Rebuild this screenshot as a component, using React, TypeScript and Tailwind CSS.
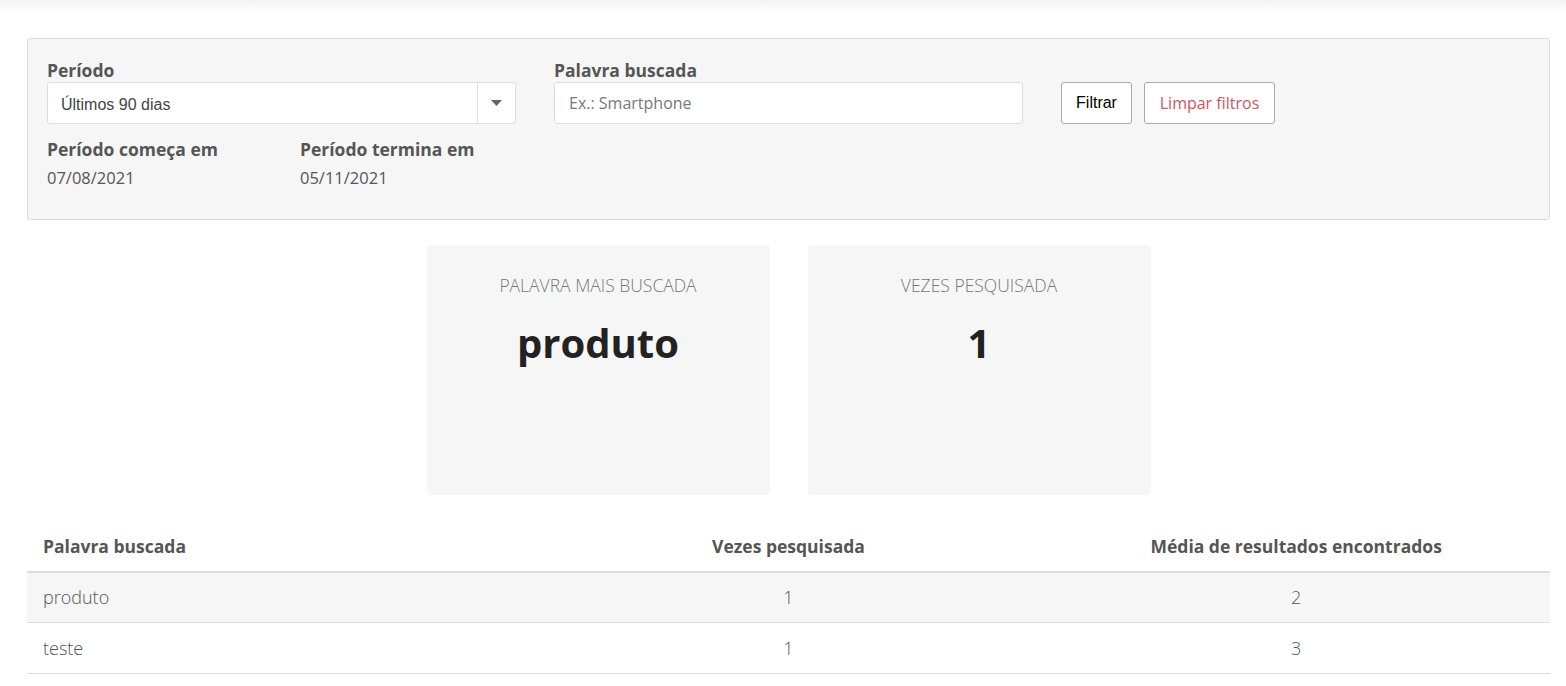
const rows = [
  { word: "produto", times: 1, avg: 2 },
  { word: "teste", times: 1, avg: 3 },
]

export default function App() {
  return (
    <div className="min-h-screen bg-white font-['Open_Sans',sans-serif] text-[#555]">
      {/* header shadow */}
      <div className="h-[14px] bg-gradient-to-b from-[#f3f3f3] to-white" />

      <div className="px-[27px] pt-[24px] pr-[16px]">
        {/* Filters */}
        <div className="rounded-[3px] border border-[#dcdcdc] bg-[#f6f6f6] px-[19px] pt-[19px] pb-[28px]">
          <div className="flex items-end">
            <div className="w-[469px]">
              <label className="block text-[17.5px] font-bold leading-[24px] text-[#555]">Período</label>
              <div className="flex h-[42px] items-center rounded-[3px] border border-[#dedede] bg-white">
                <span className="flex-1 pt-[3px] pl-[13px] font-['Liberation_Sans',sans-serif] text-[16px] text-[#444]">
                  Últimos 90 dias
                </span>
                <span className="flex h-full w-[38px] items-center justify-center border-l border-[#e2e2e2]">
                  <svg width="11" height="6" viewBox="0 0 11 6">
                    <path d="M0 0h11L5.5 6z" fill="#666" />
                  </svg>
                </span>
              </div>
            </div>
            <div className="ml-[38px] w-[469px]">
              <label className="block text-[17.5px] font-bold leading-[24px] text-[#555]">Palavra buscada</label>
              <input
                placeholder="Ex.: Smartphone"
                className="h-[42px] w-full rounded-[3px] border border-[#dedede] bg-white px-[14px] text-[16px] text-[#444] outline-none placeholder:text-[#777]"
              />
            </div>
            <button className="ml-[38px] h-[42px] w-[71px] rounded-[3px] border border-[#aaa] bg-white font-['Liberation_Sans',sans-serif] text-[16px] text-black">
              Filtrar
            </button>
            <button className="ml-[12px] h-[42px] w-[131px] rounded-[3px] border border-[#aaa] bg-white text-[16px] text-[#d0555c]">
              Limpar filtros
            </button>
          </div>
          <div className="mt-[13px] flex">
            <div className="w-[253px]">
              <div className="text-[17.5px] font-bold leading-[24px]">Período começa em</div>
              <div className="mt-[5px] text-[16.5px] text-[#555]">07/08/2021</div>
            </div>
            <div>
              <div className="text-[17.5px] font-bold leading-[24px]">Período termina em</div>
              <div className="mt-[5px] text-[16.5px] text-[#555]">05/11/2021</div>
            </div>
          </div>
        </div>

        {/* Cards */}
        <div className="mt-[25px] flex justify-center gap-[38px]">
          <Card title="PALAVRA MAIS BUSCADA" value="produto" />
          <Card title="VEZES PESQUISADA" value="1" />
        </div>

        {/* Table */}
        <table className="mt-[26px] w-full table-fixed border-collapse">
          <thead>
            <tr className="border-b-2 border-[#ddd]">
              <th className="h-[51px] px-[16px] text-left text-[17.5px] font-bold text-[#555]">Palavra buscada</th>
              <th className="px-[16px] text-center text-[17.5px] font-bold text-[#555]">Vezes pesquisada</th>
              <th className="px-[16px] text-center text-[17.5px] font-bold text-[#555]">Média de resultados encontrados</th>
            </tr>
          </thead>
          <tbody>
            {rows.map((r, i) => (
              <tr key={r.word} className={"border-b border-[#ddd] " + (i % 2 === 0 ? "bg-[#f6f6f6]" : "bg-white")}>
                <td className="h-[51px] px-[16px] text-[18px] font-light text-[#555]">{r.word}</td>
                <td className="px-[16px] text-center text-[18px] font-light text-[#555]">{r.times}</td>
                <td className="px-[16px] text-center text-[18px] font-light text-[#555]">{r.avg}</td>
              </tr>
            ))}
          </tbody>
        </table>
      </div>
    </div>
  )
}

function Card({ title, value }: { title: string; value: string }) {
  return (
    <div className="h-[250px] w-[343px] rounded-[4px] bg-[#f6f6f6] pt-[27px] text-center">
      <div className="text-[17.5px] font-light text-[#777]">{title}</div>
      <div className="mt-[18px] text-[40px] font-bold leading-[54px] text-[#222]">{value}</div>
    </div>
  )
}
